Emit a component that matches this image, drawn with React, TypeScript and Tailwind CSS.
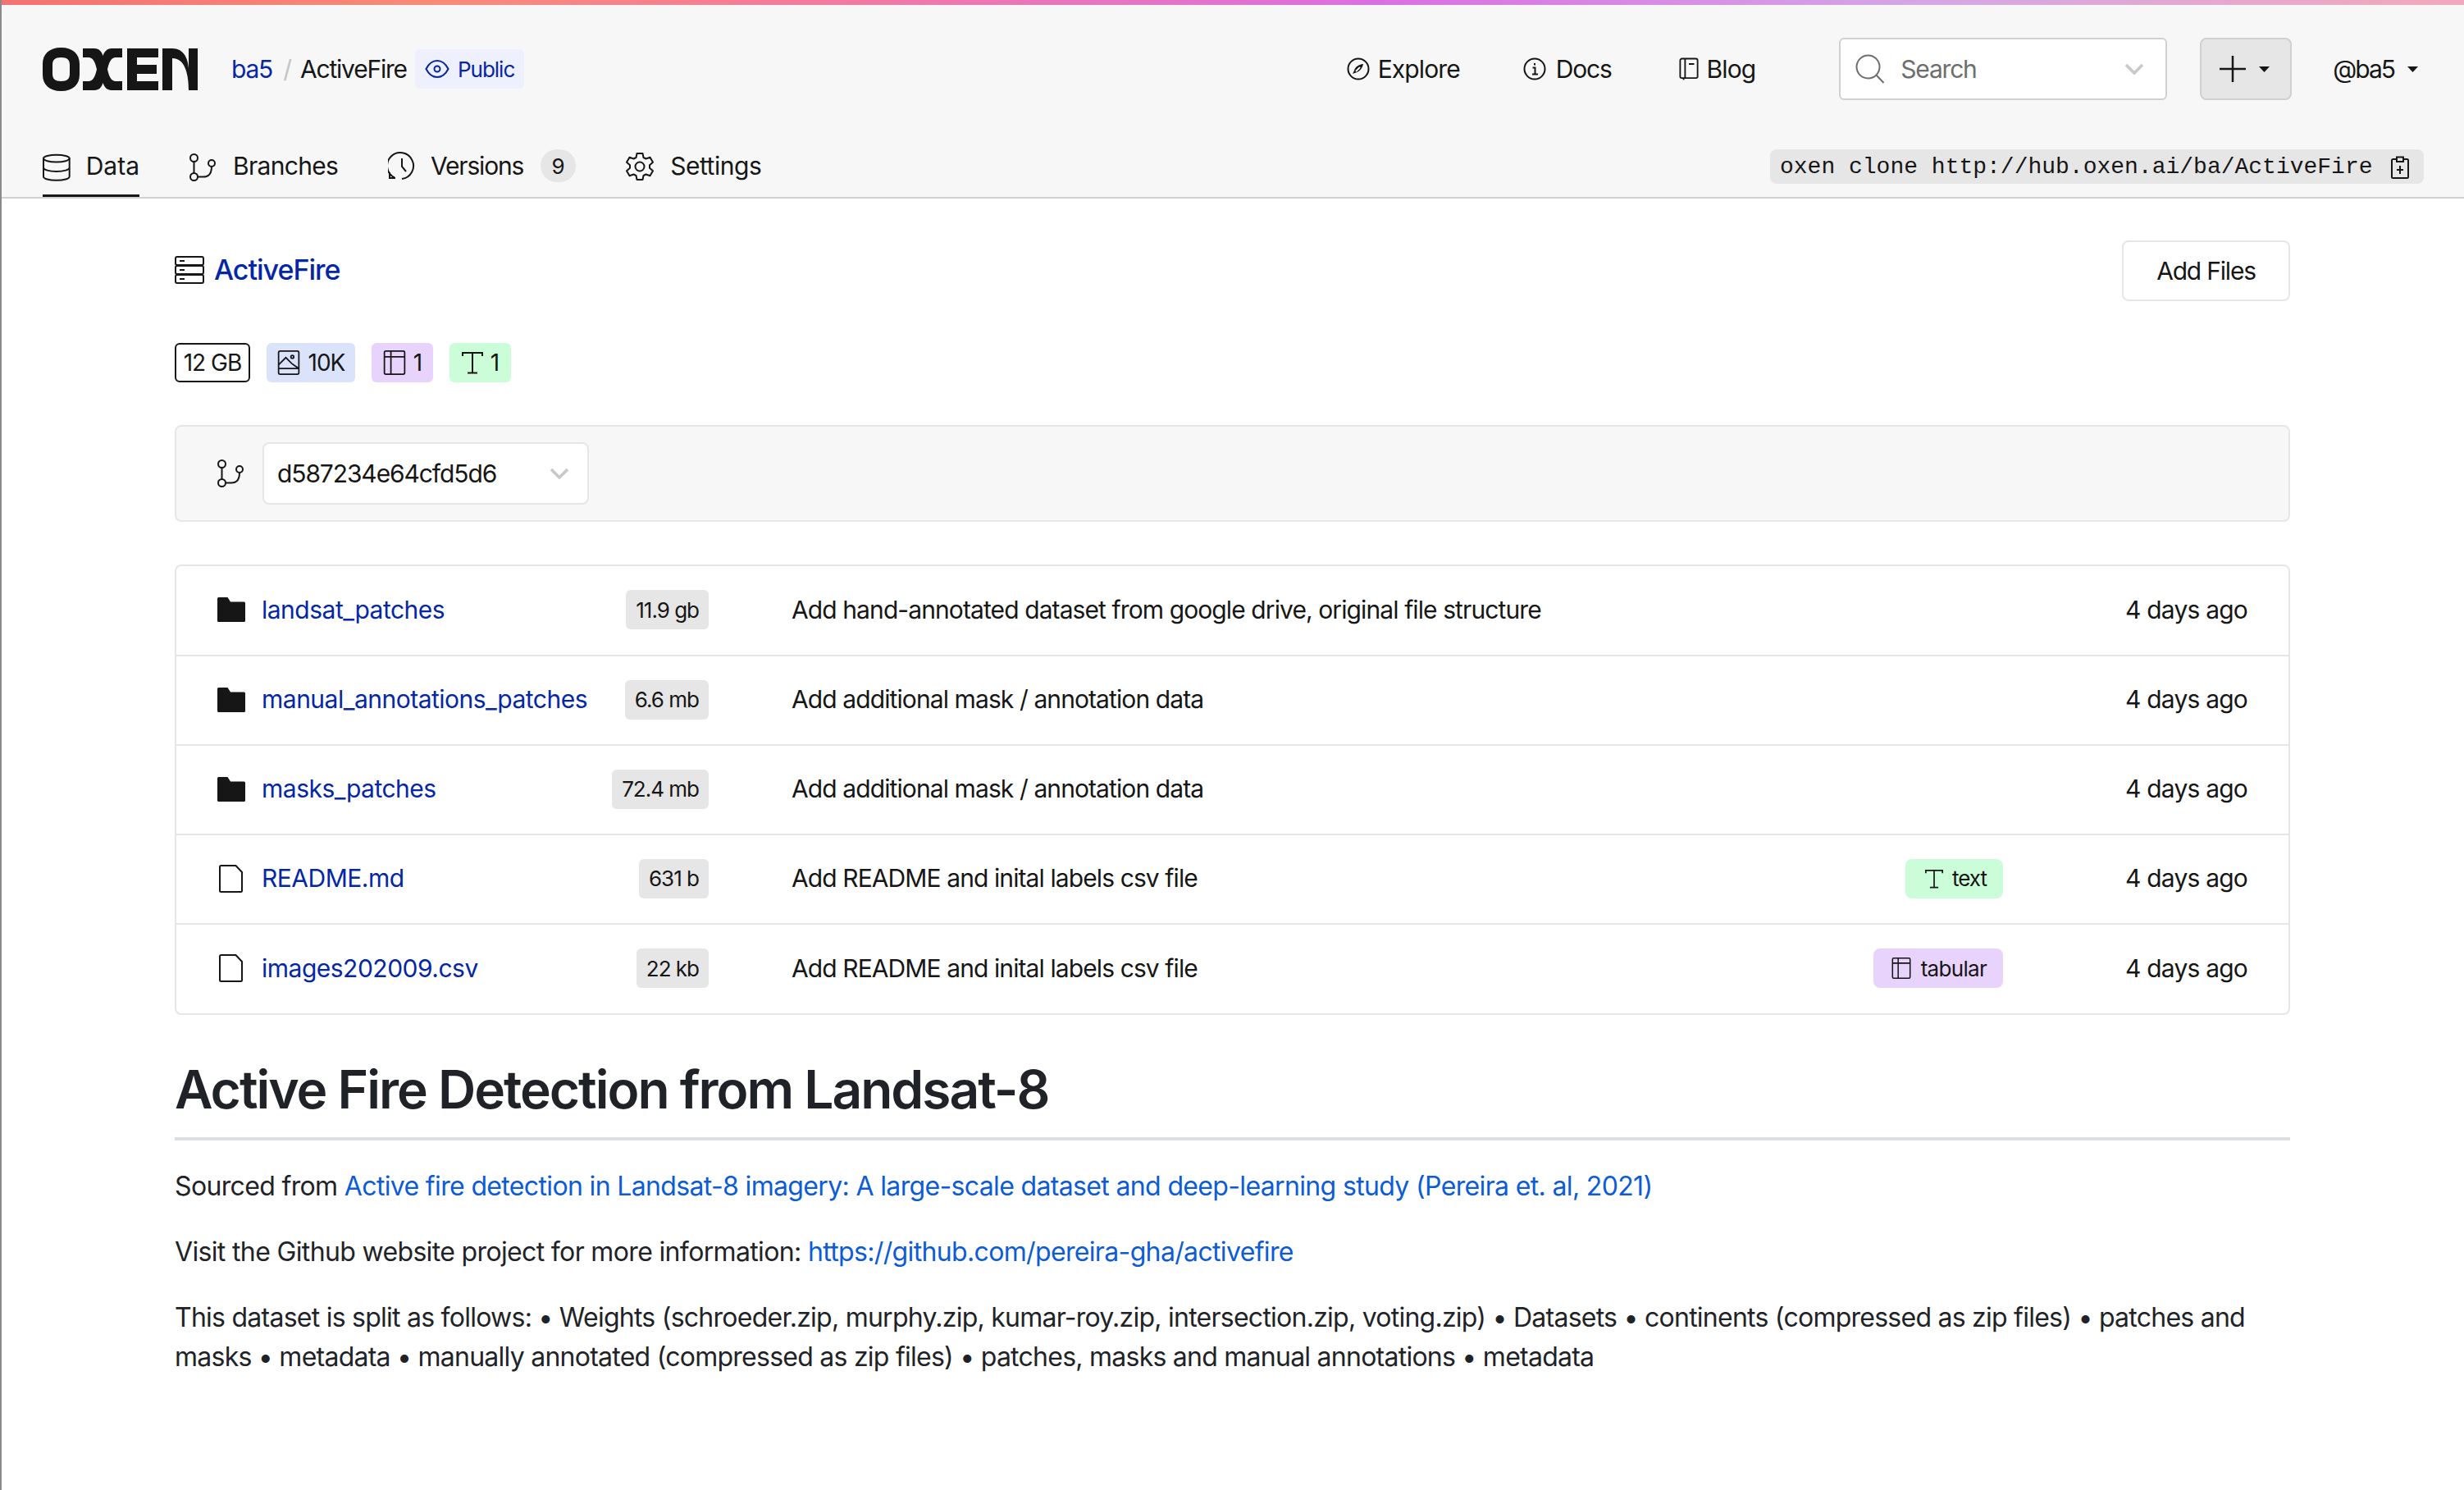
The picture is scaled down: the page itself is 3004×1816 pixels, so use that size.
import React from 'react'

type IconProps = { className?: string }

const Stroke: React.FC<React.PropsWithChildren<IconProps & { box?: string }>> = ({ className, box = '0 0 32 32', children }) => (
  <svg className={className} viewBox={box} fill="none" stroke="currentColor" strokeWidth={2}>
    {children}
  </svg>
)

const OxenLogo = () => (
  <svg className="h-[53px] w-[189px] shrink-0" viewBox="0 0 189 53" fill="#161616">
    <path fillRule="evenodd" d="M22.5 0C37 0 45 8 45 20v13c0 12-8 20-22.5 20S0 45 0 33V20C0 8 8 0 22.5 0zm0 12C15 12 12 15 12 21v11c0 6 3 9 10.5 9S33 38 33 32V21c0-6-3-9-10.5-9z" />
    <path d="M49 1h14c6 0 9 4 10.500 9 1.500-5 5-9 10.500-9h13v11h-8c-5 0-8 5-10 14.500 2 9.500 5 14.500 10 14.500h8v11H84c-5.500 0-9-4-10.500-9-1.500 5-4.500 9-10.500 9H49V41h7c5 0 8-5 10-14.500C64 17 61 12 56 12h-7z" />
    <path d="M103 1h38v11h-26v9h24v11h-24v9h26v11h-38z" />
    <path d="M146 1h12c14 0 19 12 20 24V1h11v51h-11c0-16-3-39-20-39v39h-12z" />
  </svg>
)

const DatabaseIcon = ({ className }: IconProps) => (
  <Stroke className={className} box="0 0 34 34">
    <ellipse cx="17" cy="6" rx="16" ry="4.500" />
    <path d="M1 6v22c0 3 7 5 16 5s16-2 16-5V6M1 17c0 3 7 5 16 5s16-2 16-5" />
  </Stroke>
)

const BranchIcon = ({ className }: IconProps) => (
  <Stroke className={className} box="0 0 34 34">
    <circle cx="6.500" cy="5.500" r="4.500" />
    <circle cx="6.500" cy="28.500" r="4.500" />
    <circle cx="28" cy="12" r="4" />
    <path d="M6.500 10v14M11 28.500h7c6 0 10-4 10-12.500" />
  </Stroke>
)

const HistoryIcon = ({ className }: IconProps) => (
  <Stroke className={className} box="0 0 34 34">
    <path d="M8 31.500A16 16 0 1 1 17 33M2 25v7h7M17 8v10l5 6" />
  </Stroke>
)

const GearIcon = ({ className }: IconProps) => (
  <Stroke className={className} box="0 0 36 36">
    <circle cx="18" cy="18" r="5.500" />
    <path d="M14.500 2h7l1 5 3 1.500 5-1.700 3.500 6-4 3.400v3.600l4 3.400-3.500 6-5-1.700-3 1.500-1 5h-7l-1-5-3-1.500-5 1.700-3.500-6 4-3.400v-3.600l-4-3.400 3.500-6 5 1.700 3-1.500z" strokeLinejoin="round" />
  </Stroke>
)

const EyeIcon = ({ className }: IconProps) => (
  <Stroke className={className} box="0 0 30 24">
    <path d="M1.500 12C5 5 10 2 15 2s10 3 13.500 10C25 19 20 22 15 22S5 19 1.500 12z" />
    <circle cx="15" cy="12" r="3.500" />
  </Stroke>
)

const CompassIcon = ({ className }: IconProps) => (
  <Stroke className={className} box="0 0 28 28">
    <circle cx="14" cy="14" r="12.500" />
    <path d="M20 8c-6 .5-10 4-11 8l-2 4 4-1.500c4-1 8-5 9-10.500z" fill="currentColor" stroke="none" />
    <path d="M11 17l5-5" stroke="#f7f7f7" />
  </Stroke>
)

const InfoIcon = ({ className }: IconProps) => (
  <Stroke className={className} box="0 0 28 28">
    <circle cx="14" cy="14" r="12.500" />
    <path d="M11.500 12.500H14.500V20M11 20.500h7M14 7v2.500" />
  </Stroke>
)

const BookIcon = ({ className }: IconProps) => (
  <Stroke className={className} box="0 0 26 30">
    <path d="M4 1.500h18a2.500 2.500 0 0 1 2.500 2.500v21a2 2 0 0 1-2 2H8V1.500M8 27H3.500a2 2 0 0 1-2-2V4A2.500 2.500 0 0 1 4 1.500M13 8.500h7" />
    <path d="M6 27v2.500" />
  </Stroke>
)

const SearchIcon = ({ className }: IconProps) => (
  <Stroke className={className} box="0 0 36 36">
    <circle cx="15.500" cy="15.500" r="14" />
    <path d="M25.500 25.500l9 9.500" />
  </Stroke>
)

const Chevron = () => (
  <svg className="h-[14px] w-[24px] shrink-0 text-[#c8c8c8]" viewBox="0 0 24 14" fill="none" stroke="currentColor" strokeWidth={3.500}>
    <path d="M2 2l10 10L22 2" />
  </svg>
)

const Caret = () => (
  <svg className="h-[7px] w-[13px] shrink-0 text-[#161616]" viewBox="0 0 13 7" fill="currentColor">
    <path d="M0 0h13L6.500 7z" />
  </svg>
)

const ClipboardIcon = ({ className }: IconProps) => (
  <Stroke className={className} box="0 0 22 28">
    <path d="M7 4H2.500A1.500 1.500 0 0 0 1 5.500v20A1.500 1.500 0 0 0 2.500 27h17a1.500 1.500 0 0 0 1.500-1.500v-20A1.500 1.500 0 0 0 19.500 4H15M7 1.500h8V7H7zM11 12v10M7 17h8" />
  </Stroke>
)

const RackIcon = ({ className }: IconProps) => (
  <Stroke className={className} box="0 0 36 36">
    <rect x="1" y="2" width="34" height="10" rx="2" />
    <rect x="1" y="13" width="34" height="10" rx="2" />
    <rect x="1" y="24" width="34" height="10" rx="2" />
    <path d="M6 7h6M6 18h6M6 29h6" />
  </Stroke>
)

const ImageIcon = ({ className }: IconProps) => (
  <Stroke className={className} box="0 0 30 34">
    <rect x="1" y="1" width="28" height="32" rx="2" />
    <path d="M1 25h28M1 20l10-10 8 8 4 3 6 4" />
    <circle cx="20" cy="9" r="2" />
  </Stroke>
)

const TableIcon = ({ className }: IconProps) => (
  <Stroke className={className} box="0 0 30 34">
    <rect x="1" y="1" width="28" height="32" rx="2" />
    <path d="M1 9h28M10 1v32" />
  </Stroke>
)

const TextIcon = ({ className }: IconProps) => (
  <Stroke className={className} box="0 0 26 28">
    <path d="M1 6V2h24v4M13 2v24M7 26.500h12" />
  </Stroke>
)

const FolderIcon = () => (
  <svg className="h-[30px] w-[34px] shrink-0 text-[#161616]" viewBox="0 0 34 30" fill="currentColor">
    <path d="M1.500 0h11l3.500 5.500h16.500A1.500 1.500 0 0 1 34 7v21.500a1.500 1.500 0 0 1-1.500 1.500h-31A1.500 1.500 0 0 1 0 28.500v-27A1.500 1.500 0 0 1 1.500 0z" />
  </svg>
)

const FileIcon = () => (
  <svg className="h-[34px] w-[34px] shrink-0 text-[#161616]" viewBox="0 0 34 34" fill="none" stroke="currentColor" strokeWidth={2}>
    <path d="M4.500 1h18l7.500 8v22.500a1.500 1.500 0 0 1-1.500 1.500h-24A1.500 1.500 0 0 1 3 31.500v-29A1.500 1.500 0 0 1 4.500 1z" />
  </svg>
)

const files = [
  { name: 'landsat_patches', folder: true, size: '11.9 gb', msg: 'Add hand-annotated dataset from google drive, original file structure', tag: '', row: 'h-[108px]' },
  { name: 'manual_annotations_patches', folder: true, size: '6.6 mb', msg: 'Add additional mask / annotation data', tag: '', row: 'h-[109px] border-t-2 border-[#e6e6e6]' },
  { name: 'masks_patches', folder: true, size: '72.4 mb', msg: 'Add additional mask / annotation data', tag: '', row: 'h-[109px] border-t-2 border-[#e6e6e6]' },
  { name: 'README.md', folder: false, size: '631 b', msg: 'Add README and inital labels csv file', tag: 'text', row: 'h-[109px] border-t-2 border-[#e6e6e6]' },
  { name: 'images202009.csv', folder: false, size: '22 kb', msg: 'Add README and inital labels csv file', tag: 'tabular', row: 'h-[110px] border-t-2 border-[#e6e6e6]' },
]

export default function App() {
  return (
    <div className="min-h-screen border-l-2 border-[#8a8a8a] bg-white font-['Inter',sans-serif] text-[#161616]">
      <div className="bg-[#f7f7f7]">
        <div className="h-[6px] bg-[linear-gradient(90deg,#f47272_0%,#f98b78_18%,#f47a9e_33%,#da6fe2_56%,#d5a7e6_78%,#f2a8ba_100%)]" />

        <div className="flex h-[158px] items-center pb-[2px] pl-[50px] pr-[56px]">
          <OxenLogo />
          <a className="ml-[41px] text-[30px] tracking-[-1.2px] text-[#0527a5]">ba5</a>
          <span className="ml-[13px] text-[30px] text-[#c4c4c4]">/</span>
          <span className="ml-[10px] text-[30px] tracking-[-1.2px]">ActiveFire</span>
          <span className="ml-[10px] flex h-[48px] items-center gap-[10px] rounded-[6px] bg-[#eef0fd] pl-[12px] pr-[12px] text-[26px] tracking-[-1px] text-[#0527a5]">
            <EyeIcon className="h-[24px] w-[30px]" />
            Public
          </span>

          <div className="ml-auto flex items-center gap-[10px] text-[30px] tracking-[-0.9px]">
            <CompassIcon className="h-[28px] w-[28px]" />
            Explore
          </div>
          <div className="ml-[77px] flex items-center gap-[12px] text-[30px] tracking-[-1.2px]">
            <InfoIcon className="h-[28px] w-[28px]" />
            Docs
          </div>
          <div className="ml-[82px] flex items-center gap-[10px] text-[30px] tracking-[-0.9px]">
            <BookIcon className="h-[30px] w-[24px]" />
            Blog
          </div>

          <div className="ml-[102px] flex h-[76px] w-[400px] items-center rounded-[6px] border-2 border-[#d0d0d0] bg-white pl-[18px] pr-[26px]">
            <SearchIcon className="h-[36px] w-[36px] text-[#6e6e6e]" />
            <span className="ml-[19px] text-[30px] tracking-[-1.2px] text-[#6e6e6e]">Search</span>
            <span className="ml-auto"><Chevron /></span>
          </div>

          <div className="ml-[40px] flex h-[76px] w-[112px] items-center rounded-[8px] border-2 border-[#d0d0d0] bg-[#e6e6e6] pl-[22px]">
            <svg className="h-[32px] w-[32px]" viewBox="0 0 32 32" stroke="#161616" strokeWidth={2.500}><path d="M16 0v32M0 16h32" /></svg>
            <span className="ml-[16px]"><Caret /></span>
          </div>

          <span className="ml-[50px] text-[30px] tracking-[-2px]">@ba5</span>
          <span className="ml-[16px]"><Caret /></span>
        </div>

        <div className="flex h-[78px] items-start justify-between border-b-2 border-[#d0d0d0] pl-[50px] pr-[49px] pt-[18px]">
          <div className="flex items-start text-[30px]">
            <div className="flex h-[58px] w-[118px] items-start gap-[19px] border-b-[3px] border-[#161616]">
              <DatabaseIcon className="mt-[5px] h-[34px] w-[34px]" />
              <span className="leading-[40px]">Data</span>
            </div>
            <div className="ml-[60px] flex items-start gap-[20px] tracking-[-0.7px]">
              <BranchIcon className="mt-[5px] h-[34px] w-[34px]" />
              <span className="leading-[40px]">Branches</span>
            </div>
            <div className="ml-[61px] flex items-start gap-[18px] tracking-[-1.2px]">
              <HistoryIcon className="mt-[3px] h-[34px] w-[34px]" />
              <span className="leading-[40px]">Versions</span>
            </div>
            <span className="ml-[21px] flex h-[40px] w-[43px] items-center justify-center rounded-full bg-[#e6e6e6] text-[26px]">9</span>
            <div className="ml-[60px] flex items-start gap-[19px] tracking-[-0.45px]">
              <GearIcon className="mt-[3px] h-[36px] w-[36px]" />
              <span className="leading-[40px]">Settings</span>
            </div>
          </div>
          <div className="flex h-[42px] w-[797px] items-center rounded-[8px] bg-[#e6e6e6] pl-[12px] pt-[2px] font-['Liberation_Mono',monospace] text-[28px] text-[#161616]">
            oxen clone http://hub.oxen.ai/ba/ActiveFire
            <ClipboardIcon className="ml-[22px] h-[28px] w-[22px]" />
          </div>
        </div>
      </div>

      <main className="pl-[211px] pr-[212px]">
        <div className="flex h-[125px] items-start justify-between pt-[51px]">
          <div className="flex items-center gap-[12px] pt-[14px]">
            <RackIcon className="h-[36px] w-[36px]" />
            <span className="text-[34px] font-medium leading-[44px] tracking-[-1px] text-[#0527a5]">ActiveFire</span>
          </div>
          <button className="flex h-[74px] w-[205px] items-center justify-center rounded-[8px] border-2 border-[#e6e6e6] bg-white text-[30px] tracking-[-1.2px]">Add Files</button>
        </div>

        <div className="mt-[51px] flex items-center gap-[20px] text-[28px] tracking-[-1px]">
          <span className="flex h-[48px] w-[92px] items-center justify-center rounded-[6px] border-2 border-[#161616]">12 GB</span>
          <span className="flex h-[48px] w-[108px] items-center justify-center gap-[10px] rounded-[6px] bg-[#dbe3fb]">
            <ImageIcon className="h-[30px] w-[28px]" />10K
          </span>
          <span className="flex h-[48px] w-[75px] items-center justify-center gap-[9px] rounded-[6px] bg-[#e8d3fc]">
            <TableIcon className="h-[30px] w-[28px]" />1
          </span>
          <span className="flex h-[48px] w-[75px] items-center justify-center gap-[9px] rounded-[6px] bg-[#ccfdd9]">
            <TextIcon className="h-[28px] w-[26px]" />1
          </span>
        </div>

        <div className="mt-[52px] flex h-[118px] items-center rounded-[8px] border-2 border-[#e6e6e6] bg-[#f7f7f7] pl-[49px]">
          <BranchIcon className="h-[34px] w-[34px]" />
          <div className="ml-[22px] flex h-[76px] w-[398px] items-center justify-between rounded-[8px] border-2 border-[#e6e6e6] bg-white pl-[16px] pr-[22px] text-[30px] tracking-[-1.1px]">
            d587234e64cfd5d6
            <Chevron />
          </div>
        </div>

        <div className="mt-[52px] rounded-[8px] border-2 border-[#e6e6e6]">
          {files.map((f) => (
            <div key={f.name} className={`flex items-center pb-[2px] text-[30px] ${f.row}`}>
              <div className="flex w-[649px] shrink-0 items-center pl-[50px]">
                <span className="flex w-[34px] justify-center">{f.folder ? <FolderIcon /> : <FileIcon />}</span>
                <a className="ml-[20px] tracking-[-0.5px] text-[#0527a5]">{f.name}</a>
                <span className="ml-auto flex h-[48px] items-center rounded-[6px] bg-[#e6e6e6] px-[12px] text-[26px] tracking-[-1px]">{f.size}</span>
              </div>
              <span className="ml-[101px] tracking-[-0.9px]">{f.msg}</span>
              {f.tag === 'text' && (
                <span className="ml-auto flex h-[48px] items-center gap-[11px] rounded-[8px] bg-[#ccfdd9] pl-[24px] pr-[20px] text-[26px] tracking-[-1px]">
                  <TextIcon className="h-[24px] w-[22px]" />text
                </span>
              )}
              {f.tag === 'tabular' && (
                <span className="ml-auto flex h-[48px] items-center gap-[10px] rounded-[8px] bg-[#e8d3fc] pl-[20px] pr-[20px] text-[26px] tracking-[-0.7px]">
                  <TableIcon className="h-[26px] w-[28px]" />tabular
                </span>
              )}
              <span className={`w-[348px] shrink-0 pr-[50px] text-right tracking-[-0.8px] ${f.tag ? '' : 'ml-auto'}`}>4 days ago</span>
            </div>
          ))}
        </div>

        <article className="text-[32px] leading-[48px] text-[#1f2328]">
          <h1 className="mt-[55px] border-b-4 border-[#d8dee4] pb-[22px] text-[64px] font-semibold leading-[72px] tracking-[-2px]">Active Fire Detection from Landsat-8</h1>
          <p className="mt-[32px] tracking-[-0.65px]">
            Sourced from <a className="text-[#0b5cd5]">Active fire detection in Landsat-8 imagery: A large-scale dataset and deep-learning study (Pereira et. al, 2021)</a>
          </p>
          <p className="mt-[32px] tracking-[-0.65px]">
            Visit the Github website project for more information: <a className="text-[#0b5cd5]">https://github.com/pereira-gha/activefire</a>
          </p>
          <p className="mt-[32px] tracking-[-0.75px]">
            This dataset is split as follows: • Weights (schroeder.zip, murphy.zip, kumar-roy.zip, intersection.zip, voting.zip) • Datasets • continents (compressed as zip files) • patches and masks • metadata • manually annotated (compressed as zip files) • patches, masks and manual annotations • metadata
          </p>
        </article>
      </main>
    </div>
  )
}
